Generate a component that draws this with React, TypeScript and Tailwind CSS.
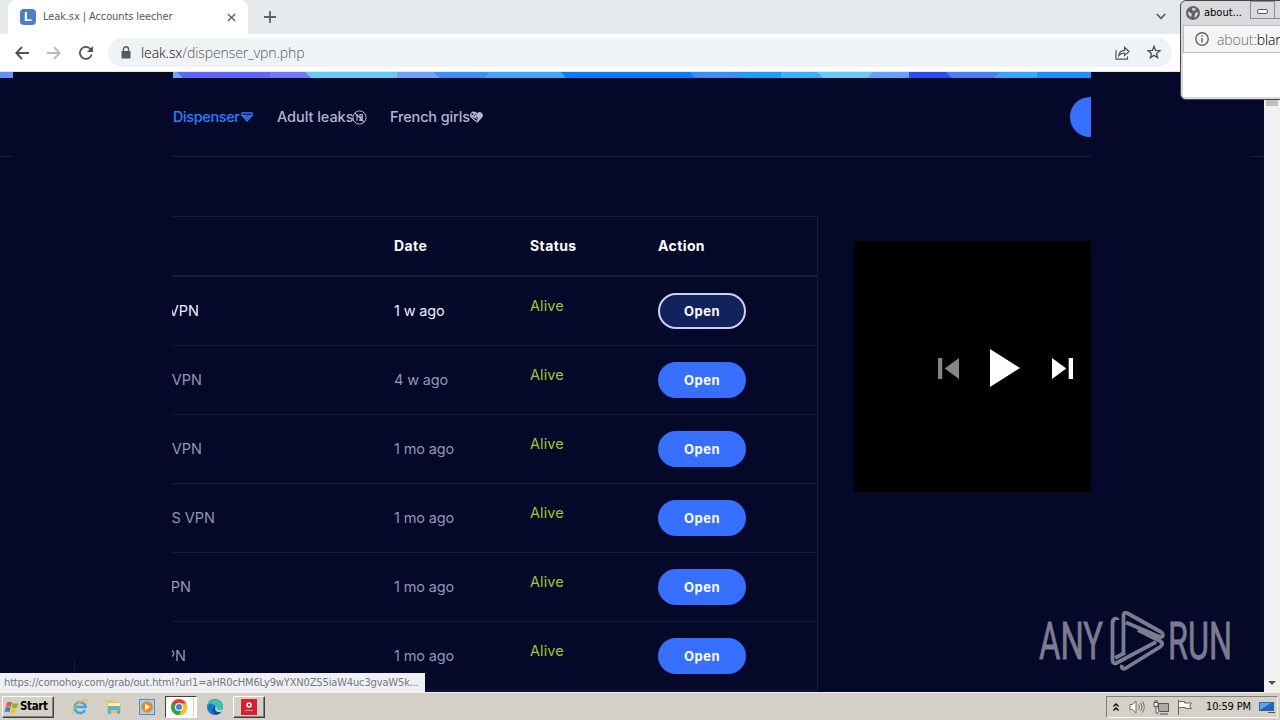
import type { ReactNode } from "react";

const rows = [
  { name: "VPN", date: "1 w ago", width: "w-[27px]", active: true },
  { name: "VPN", date: "4 w ago", width: "w-[30px]" },
  { name: "VPN", date: "1 mo ago", width: "w-[30px]" },
  { name: "S VPN", date: "1 mo ago", width: "w-[43px]" },
  { name: "PN", date: "1 mo ago", width: "w-[19px]" },
  { name: "PN", date: "1 mo ago", width: "w-[14px]" },
];

function DiamondIcon() {
  return (
    <svg viewBox="0 0 12 10" className="ml-[2px] h-[10px] w-3 shrink-0" fill="none" stroke="currentColor" strokeWidth="1.3">
      <path d="M.5 1h11M1 1l-.3 2L6 9l5.300-6L11 1M1 3.600h10M3.500 3.600 6 6.500l2.500-2.900" />
    </svg>
  );
}

function AdultIcon() {
  return (
    <svg viewBox="0 0 15 15" className="-ml-px h-[15px] w-[15px] shrink-0" fill="none" stroke="currentColor">
      <circle cx="7.500" cy="7.500" r="6.600" />
      <path d="m2.800 2.800 9.400 9.400M4 5.500l1-.7v6M8 4.500h2.300v2.500H8zM8 7.500h2.300v3H8z" strokeWidth="1.200" />
    </svg>
  );
}

function HeartIcon() {
  return (
    <svg viewBox="0 0 13 12" className="h-3 w-[13px] shrink-0" fill="none" stroke="currentColor" strokeWidth="1.200">
      <path d="M7.200 11.200 11.800 6C13.500 3 10 .2 7.800 2.600L7 5l1.500 2z" fill="currentColor" />
      <path d="M7 11 1 6C-.3 3 2.400.2 5 1.400c2 .8 2.600 2 2.200 3.600L5 5.500 7 8M1 4l4 3M3 2l3 3M5 2 2 6" />
    </svg>
  );
}

function BrowserTabs() {
  return (
    <div className="flex h-[34px] bg-[#e7eaed] text-[#5f6368]">
      <div className="ml-2 flex w-60 items-center rounded-t-lg bg-white pl-3">
        <span className="flex h-4 w-4 items-center justify-center rounded-[4px] bg-[#4b7fc0] font-['Liberation_Sans',sans-serif] text-[13px] font-bold text-white">
          L
        </span>
        <span className="mt-px ml-[7px] w-[184px] whitespace-nowrap font-['DejaVu_Sans_Condensed','DejaVu_Sans',sans-serif] text-[11px] tracking-[-0.1px] text-[#55595d]">
          Leak.sx | Accounts leecher
        </span>
        <svg viewBox="0 0 10 10" className="h-[9px] w-[9px]" stroke="currentColor" strokeWidth="1.600">
          <path d="m1 1 8 8M9 1 1 9" />
        </svg>
      </div>
      <svg viewBox="0 0 12 12" className="mt-[11px] ml-4 h-3 w-3" stroke="currentColor" strokeWidth="1.800">
        <path d="M6 0v12M0 6h12" />
      </svg>
      <svg viewBox="0 0 10 7" className="mt-[13px] ml-[880px] h-[7px] w-[10px]" fill="none" stroke="currentColor" strokeWidth="1.800">
        <path d="m.8 1 4.200 4.400L9.200 1" />
      </svg>
    </div>
  );
}

function Toolbar() {
  return (
    <div className="flex h-[38px] items-center border-b border-[#e4e7ea] bg-white text-[#4f5256]">
      <svg viewBox="0 0 14 14" className="ml-[15px] h-[14px] w-[14px]" fill="none" stroke="currentColor" strokeWidth="1.800">
        <path d="M14 7H1.500M7 1 1.200 7 7 13" />
      </svg>
      <svg viewBox="0 0 14 14" className="ml-[18px] h-[14px] w-[14px] text-[#b7babd]" fill="none" stroke="currentColor" strokeWidth="1.800">
        <path d="M0 7h12.500M7 1l5.800 6L7 13" />
      </svg>
      <svg viewBox="0 0 14 14" className="ml-[18px] h-[14px] w-[14px]" fill="none" stroke="currentColor" strokeWidth="1.800">
        <path d="M12.700 8.500A6 6 0 1 1 11.400 2.900L13 4.600" />
        <path d="M14 0v6H8z" fill="currentColor" stroke="none" />
      </svg>
      <div className="ml-[15px] flex h-[29px] w-[1064px] items-center rounded-full bg-[#f0f3f5] pl-[13px]">
        <svg viewBox="0 0 10 13" className="mb-px h-[13px] w-[10px]" fill="none">
          <path d="M0.500 5h9v7.500h-9z" fill="#55585c" />
          <path d="M2.500 5V3.300a2.500 2.500 0 0 1 5 0V5" stroke="#55585c" strokeWidth="1.400" />
        </svg>
        <span className="ml-[10px] w-[974px] font-['Open_Sans',sans-serif] text-[14px] font-light tracking-[-0.09px] text-[#55595e]">
          <span className="text-[#111]">leak.sx</span>/dispenser_vpn.php
        </span>
        <svg viewBox="0 0 15 14" className="h-[14px] w-[15px]" fill="none" stroke="currentColor" strokeWidth="1.200">
          <path d="M1 4v9.200h11.500V10.500M3.800 9.800C4 6 6.500 4.300 9.600 4.300V1.500L14 5.600 9.600 9.500V7C7 7 5.200 7.600 3.800 9.800z" />
        </svg>
        <svg viewBox="0 0 14 14" className="mb-px ml-[17px] h-[14px] w-[14px]" fill="none" stroke="currentColor" strokeWidth="1.400">
          <path d="m7 1.400 1.600 4 4.300.3-3.300 2.800 1 4.200L7 10.400l-3.600 2.300 1-4.200L1.100 5.700l4.300-.3z" />
        </svg>
      </div>
    </div>
  );
}

function ColorStrip() {
  return (
    <svg viewBox="0 0 918 6" className="ml-px h-1.5 w-[918px] shrink-0">
      <path d="M0 0h918v6H0z" fill="#1e90fb" />
      <path d="M0 0h10v6H0z" fill="#68a8ff" />
      <path d="M4 0h96v6H10z" fill="#5c69f8" />
      <path d="M97 0h37l6 6H97z" fill="#6e78f8" />
      <path d="M132 0h92v6h-86z" fill="#66ccf6" />
      <path d="M224 0h37l6 6h-43z" fill="#70a2f8" />
      <path d="M261 0h56l-6 6h-44z" fill="#3c8ff8" />
      <path d="M317 0h72l5 6h-83z" fill="#3da8fc" />
      <path d="M388 0h129l5 6H393z" fill="#0a7bfd" />
      <path d="M517 0h56l-6 6h-45z" fill="#3c8df8" />
      <path d="M573 0h35v6h-41z" fill="#18a0ff" />
      <path d="M608 0h36l6 6h-42z" fill="#3eaffb" />
      <path d="M644 0h56l-5 6h-45z" fill="#66ccf6" />
      <path d="M700 0h36v6h-41z" fill="#60a3fa" />
      <path d="M736 0h37l6 6h-43z" fill="#294cf3" />
      <path d="M773 0h54l-6 6h-42z" fill="#4581fb" />
      <path d="M827 0h37v6h-43z" fill="#3ba6fd" />
    </svg>
  );
}

function NavItem({ className, children }: { className: string; children: ReactNode }) {
  return <div className={`flex items-center whitespace-nowrap ${className}`}>{children}</div>;
}

function Leaks() {
  return (
    <div className="flex h-[476px] w-[646px] flex-col border-t border-r border-[#171a3c]">
      <div className="flex h-[60px] shrink-0 items-center border-b-2 border-[#1a1d3f] pb-[2px] text-[14px] font-bold tracking-[0.4px] text-white">
        <span className="ml-[222px] w-[136px]">Date</span>
        <span className="w-[128px]">Status</span>
        <span>Action</span>
      </div>
      {rows.map((row, i) => (
        <div
          key={i}
          className={`flex h-[69px] shrink-0 items-center border-b border-[#171a3c] text-[14.500px] ${row.active ? "text-[#eceeff]" : "text-[#9295b5]"}`}
        >
          <div className="w-[222px]">
            <div className={`flex justify-end overflow-hidden whitespace-nowrap ${row.width}`}>{row.name}</div>
          </div>
          <span className="w-[136px] tracking-[-0.15px]">{row.date}</span>
          <span className="mb-[10px] w-[128px] tracking-[0.1px] text-[#9dc732]">Alive</span>
          <button
            className={`h-9 w-[88px] rounded-full pt-[2px] text-[13px] font-bold tracking-[0.5px] text-white ${row.active ? "border-2 border-[#c6d3fb] bg-[#12235c]" : "bg-[#376fff]"}`}
          >
            Open
          </button>
        </div>
      ))}
    </div>
  );
}

function Player() {
  return (
    <div className="mt-[25px] ml-9 flex h-[251px] w-[237px] items-center bg-black pt-[3px] pl-[84px]">
      <svg viewBox="0 0 22 22" className="h-[21px] w-[21px] shrink-0" fill="#858585">
        <path d="M0 0h4.500v22H0zM22 0v22L7 11z" />
      </svg>
      <svg viewBox="0 0 30 38" className="ml-[31px] h-[38px] w-[30px] shrink-0" fill="#fff">
        <path d="m0 0 30 19L0 38z" />
      </svg>
      <svg viewBox="0 0 22 22" className="ml-[32px] h-[21px] w-[21px] shrink-0" fill="#fff">
        <path d="m0 0 15 11L0 22zM17.500 0H22v22h-4.500z" />
      </svg>
    </div>
  );
}

function Gutter() {
  return (
    <div className="w-[14px]">
      <div className="h-[85px] border-b border-[#171a3c]" />
    </div>
  );
}

function Page() {
  return (
    <div className="flex h-[620px] overflow-hidden bg-[#040829] font-[Inter,sans-serif]">
      <div className="w-[13px]">
        <div className="h-1.5 bg-[#5f93f6]" />
        <div className="h-[79px] border-b border-[#171a3c]" />
      </div>
      <div className="flex w-[159px] flex-col bg-[#050829]">
        <div className="mt-[588px] ml-[61px] h-[13px] w-px bg-[#171a3c]" />
      </div>
      <main className="w-[919px]">
        <ColorStrip />
        <nav className="flex h-[79px] items-center border-b border-[#171a3c] text-[14.500px] font-medium tracking-[-0.25px] text-[#b3b5d0]">
          <NavItem className="ml-px w-[104px] text-[#2a81ff]">
            <span className="tracking-[-0.4px]">Dispenser</span>
            <DiamondIcon />
          </NavItem>
          <NavItem className="w-[113px]">
            <span className="tracking-[-0.05px]">Adult leaks</span>
            <AdultIcon />
          </NavItem>
          <NavItem className="w-[680px]">
            <span className="tracking-[-0.15px]">French girls</span>
            <HeartIcon />
          </NavItem>
          <div className="h-10 w-[21px] shrink-0 rounded-l-full bg-[#376fff]" />
        </nav>
        <div className="mt-[59px] flex items-start">
          <Leaks />
          <Player />
        </div>
      </main>
      <div className="w-[159px] bg-[#050829]" />
      <Gutter />
      <div className="flex w-4 flex-col items-center justify-between bg-[#f1f1f1] pb-[7px]">
        <div className="mt-[17px] h-[17px] w-3 bg-[#c1c1c1]" />
        <svg viewBox="0 0 8 4" className="h-1 w-2" fill="#505050">
          <path d="M0 0h8L4 4z" />
        </svg>
      </div>
    </div>
  );
}

function Taskbar() {
  const raised = "border border-t-white border-l-white border-r-[#404040] border-b-[#404040]";
  return (
    <div className="flex h-7 items-center border-t border-[#f4f2ee] bg-[#d4d0c8] pt-px font-['DejaVu_Sans_Condensed','DejaVu_Sans',sans-serif] text-[11px] text-black">
      <div className={`ml-[2px] flex h-[22px] w-[52px] items-center shadow-[inset_-1px_-1px_#808080] ${raised}`}>
        <svg viewBox="0 0 15 14" className="ml-px h-[15px] w-[15px] shrink-0">
          <path d="M3 2c2-1 3-1 5 0L6.800 6.500c-2-1-3-1-5 0z" fill="#e8582a" />
          <path d="M8.600 2.500c2 1 3.500 1 5.700 0L13 7c-2 1-3.600 1-5.400 0z" fill="#7db83a" />
          <path d="M1.600 7.300c2-1 3-1 5 0l-1.200 4.500c-2-1-3-1-5 0z" fill="#3e7fd4" />
          <path d="M7.300 7.800c2 1 3.300 1 5.500 0l-1.200 4.500c-2 1-3.700 1-5.500 0z" fill="#f5c02f" />
        </svg>
        <span className="ml-px text-[11.500px] font-bold tracking-[-0.35px]">Start</span>
      </div>
      <svg viewBox="0 0 18 18" className="ml-[17px] h-[18px] w-[18px]" fill="none">
        <path d="M14 12.200A5.500 5.500 0 1 1 14.600 9H4.500" stroke="#3fa7e2" strokeWidth="2.600" />
        <path d="M1.500 16C-.5 12.500 10 .5 16 2c1.500.5 1 2.500.5 3.500" stroke="#edbd3e" strokeWidth="1.300" />
      </svg>
      <svg viewBox="0 0 18 18" className="ml-4 h-[18px] w-[18px]">
        <path d="M2 2h6l1 2h7v11H2z" fill="#e5c164" />
        <path d="M3 5h12v4H3z" fill="#fff1b0" />
        <path d="M3 8h12v8h-3v-4H6v4H3z" fill="#5eafd8" />
      </svg>
      <div className="ml-4 flex h-4 w-4 items-center justify-center border border-[#4c91c5] bg-[#a9d0e8]">
        <svg viewBox="0 0 12 12" className="h-3 w-3">
          <circle cx="6" cy="6" r="5.800" fill="#ef8520" />
          <path d="m4 2.500 5 3.500-5 3.500z" fill="#fff" />
        </svg>
      </div>
      <div className="ml-[10px] flex h-[22px] w-8 items-center border border-t-[#404040] border-r-white border-b-white border-l-[#404040] bg-white pl-[5px]">
        <svg viewBox="0 0 16 16" className="h-4 w-4">
          <circle cx="8" cy="8" r="8" fill="#e53d30" />
          <path d="M8 8 1.100 4A8 8 0 0 0 8 16l3.500-6z" fill="#2fa34d" />
          <path d="M8 4.500h7.200A8 8 0 0 1 8 16l3.300-6z" fill="#fbc41b" />
          <circle cx="8" cy="8" r="4" fill="#fff" />
          <circle cx="8" cy="8" r="3" fill="#3e7ee8" />
        </svg>
        <div className="ml-[6px] h-5 w-px bg-[#d4d0c8]" />
      </div>
      <svg viewBox="0 0 16 16" className="ml-[10px] h-4 w-4">
        <circle cx="8" cy="8" r="8" fill="#1679ce" />
        <path d="M.5 6C3-1 14-2 16 7c0 4-4 5-6 4-2 0-1-2-1-3C7 4 3 4 .5 6z" fill="#3cc5a8" />
        <path d="M8.500 7c-1.500 2-.5 6 6 5-1 2-3 3.500-5 3.800C4 14 4 9 8.500 7z" fill="#0c4f9d" />
        <path d="M9 7.500c1 1 0 2.500 1.500 3.300 2 1 4 .3 5.200-1L16 12l-3 1c-4 .5-6-3-4-5.500z" fill="#d4d0c8" />
      </svg>
      <div className={`ml-[10px] flex h-[22px] w-8 items-center justify-center shadow-[inset_-1px_-1px_#808080] ${raised}`}>
        <svg viewBox="0 0 16 16" className="h-4 w-4">
          <path d="M0 0h16v16H0z" fill="#d9202f" />
          <circle cx="8" cy="6" r="2" fill="none" stroke="#fff" strokeWidth="1.500" />
          <path d="M4 11.500h8" stroke="#f19aa0" />
        </svg>
      </div>
      <div className="mr-[2px] ml-auto flex h-[22px] w-[172px] items-center border border-t-[#808080] border-r-white border-b-white border-l-[#808080]">
        <svg viewBox="0 0 6 8" className="ml-[6px] h-2 w-1.5 shrink-0" fill="none" stroke="#000" strokeWidth="1.300">
          <path d="m.5 3.500 2.500-2.500 2.500 2.500M.5 7.500 3 5l2.500 2.500" />
        </svg>
        <svg viewBox="0 0 16 14" className="ml-[10px] h-[14px] w-4 shrink-0" fill="none" stroke="#6d6d6d">
          <path d="M1 4.500h2.500L7 1v12L3.500 9.500H1z" fill="#fff" />
          <path d="M9.500 4.500c1 1.500 1 3.500 0 5M11.500 3c1.800 2.500 1.800 5.500 0 8M13.500 1.500c2.300 3.500 2.300 7.500 0 11" />
        </svg>
        <svg viewBox="0 0 16 15" className="ml-2 h-[15px] w-4 shrink-0" fill="none" stroke="#555">
          <path d="M5.500 3.500h10v8h-10z" fill="#aaa" />
          <path d="M1 2.500h4v4H1zM2 0v2.500M4 0v2.500M3 6.500V13h3M7 14h8" fill="#fff" />
        </svg>
        <svg viewBox="0 0 16 15" className="ml-2 h-[15px] w-4 shrink-0" fill="#fff" stroke="#666">
          <path d="M1.500 0v15M1.500 1.500h6v1.500h7l-2 3 2 2.500h-6V7.500h-7z" />
        </svg>
        <span className="ml-[13px] w-[46px] whitespace-nowrap tracking-[-0.150px]">10:59 PM</span>
        <svg viewBox="0 0 16 13" className="ml-[7px] h-[13px] w-4 shrink-0">
          <path d="M0 1h15v9H0z" fill="#2666b8" />
          <path d="M1 2h11L4 7 1 9z" fill="#63a1df" />
          <path d="M9 11h7v1H9z" fill="#555" />
        </svg>
      </div>
    </div>
  );
}

function Popup() {
  return (
    <div className="absolute top-0 left-[1180px] h-[100px] w-[110px] overflow-hidden rounded-md border border-[#44474a] bg-[#d8dadd]">
      <div className="flex h-6 items-center pl-[5px] font-['DejaVu_Sans_Condensed','DejaVu_Sans',sans-serif] text-[11px] text-black">
        <svg viewBox="0 0 14 14" className="h-[14px] w-[14px] shrink-0">
          <circle cx="7" cy="7" r="7" fill="#5f6368" />
          <path d="M2 5.500 6 8l-1 3C3 10 1.800 8 2 5.500zM6 2l4 .5L8.500 5 6.500 4.500zM9 7l3-1c0 3-1.500 5-3.500 6z" fill="#d8dadd" />
        </svg>
        <span className="ml-[4px] w-[46px] shrink-0 whitespace-nowrap">about...</span>
        <div className="mb-[7px] flex h-[18px] w-[25px] shrink-0 items-center justify-center border border-[#8b8e91]">
          <div className="mt-1 h-[5px] w-[11px] rounded-xs border border-[#55585c] bg-white" />
        </div>
        <div className="mb-[7px] h-[18px] w-5 shrink-0 border-b border-[#8b8e91]" />
      </div>
      <div className="ml-[2px] h-[72px] bg-white">
        <div className="flex h-[28px] items-center border border-[#b9bbbe] bg-[#f4f4f5] pl-[11px] font-['Open_Sans',sans-serif] text-[14px] font-light text-[#6a6d70]">
          <svg viewBox="0 0 14 14" className="h-[14px] w-[14px] shrink-0" fill="none" stroke="#5f6368" strokeWidth="1.400">
            <circle cx="7" cy="7" r="6.200" />
            <path d="M7 6v4.500M7 3.300v1.500" />
          </svg>
          <span className="ml-[8px] whitespace-nowrap tracking-[-0.1px]">
            about:<span className="text-black">blank</span>
          </span>
        </div>
      </div>
    </div>
  );
}

function Watermark() {
  return (
    <div className="absolute top-[609px] left-[1038px] text-[#7b7c91]">
      <svg viewBox="0 0 196 64" className="h-16 w-[196px]">
        <g className="font-['Roboto',sans-serif] text-[51px]" fill="currentColor" stroke="currentColor" strokeWidth="0.800">
          <text x="1" y="49.500" textLength="64" lengthAdjust="spacingAndGlyphs">
            ANY
          </text>
          <text x="130" y="49.500" textLength="64" lengthAdjust="spacingAndGlyphs">
            RUN
          </text>
        </g>
        <g fill="none" stroke="currentColor" strokeWidth="3.800" strokeLinejoin="round">
          <path d="M79.500 11c0-2-5-2-5 3v37c0 3 2 4 4 3L118 33" />
          <path d="M85.500 46V6c0-2 1.500-3 3.500-2l34 19c3 2 2 6-1 5L88 13.500" />
          <path d="M77 49 86.500 44M100 21l22 11c3 1.500 3 4 0 6L88 59c-2 1.500-5 1-4-3" />
        </g>
      </svg>
    </div>
  );
}

export default function App() {
  return (
    <div className="relative h-[720px] w-[1280px] overflow-hidden">
      <BrowserTabs />
      <Toolbar />
      <Page />
      <Taskbar />
      <div className="absolute top-[673px] left-0 flex h-[19px] w-[425px] items-center bg-[#eef0f3] pt-[2px] pl-1 font-['DejaVu_Sans_Condensed','DejaVu_Sans',sans-serif] text-[11px] tracking-[-0.14px] whitespace-nowrap text-[#75787c]">
        https://comohoy.com/grab/out.html?url1=aHR0cHM6Ly9wYXN0ZS5iaW4uc3gvaW5k...
      </div>
      <Watermark />
      <Popup />
    </div>
  );
}
